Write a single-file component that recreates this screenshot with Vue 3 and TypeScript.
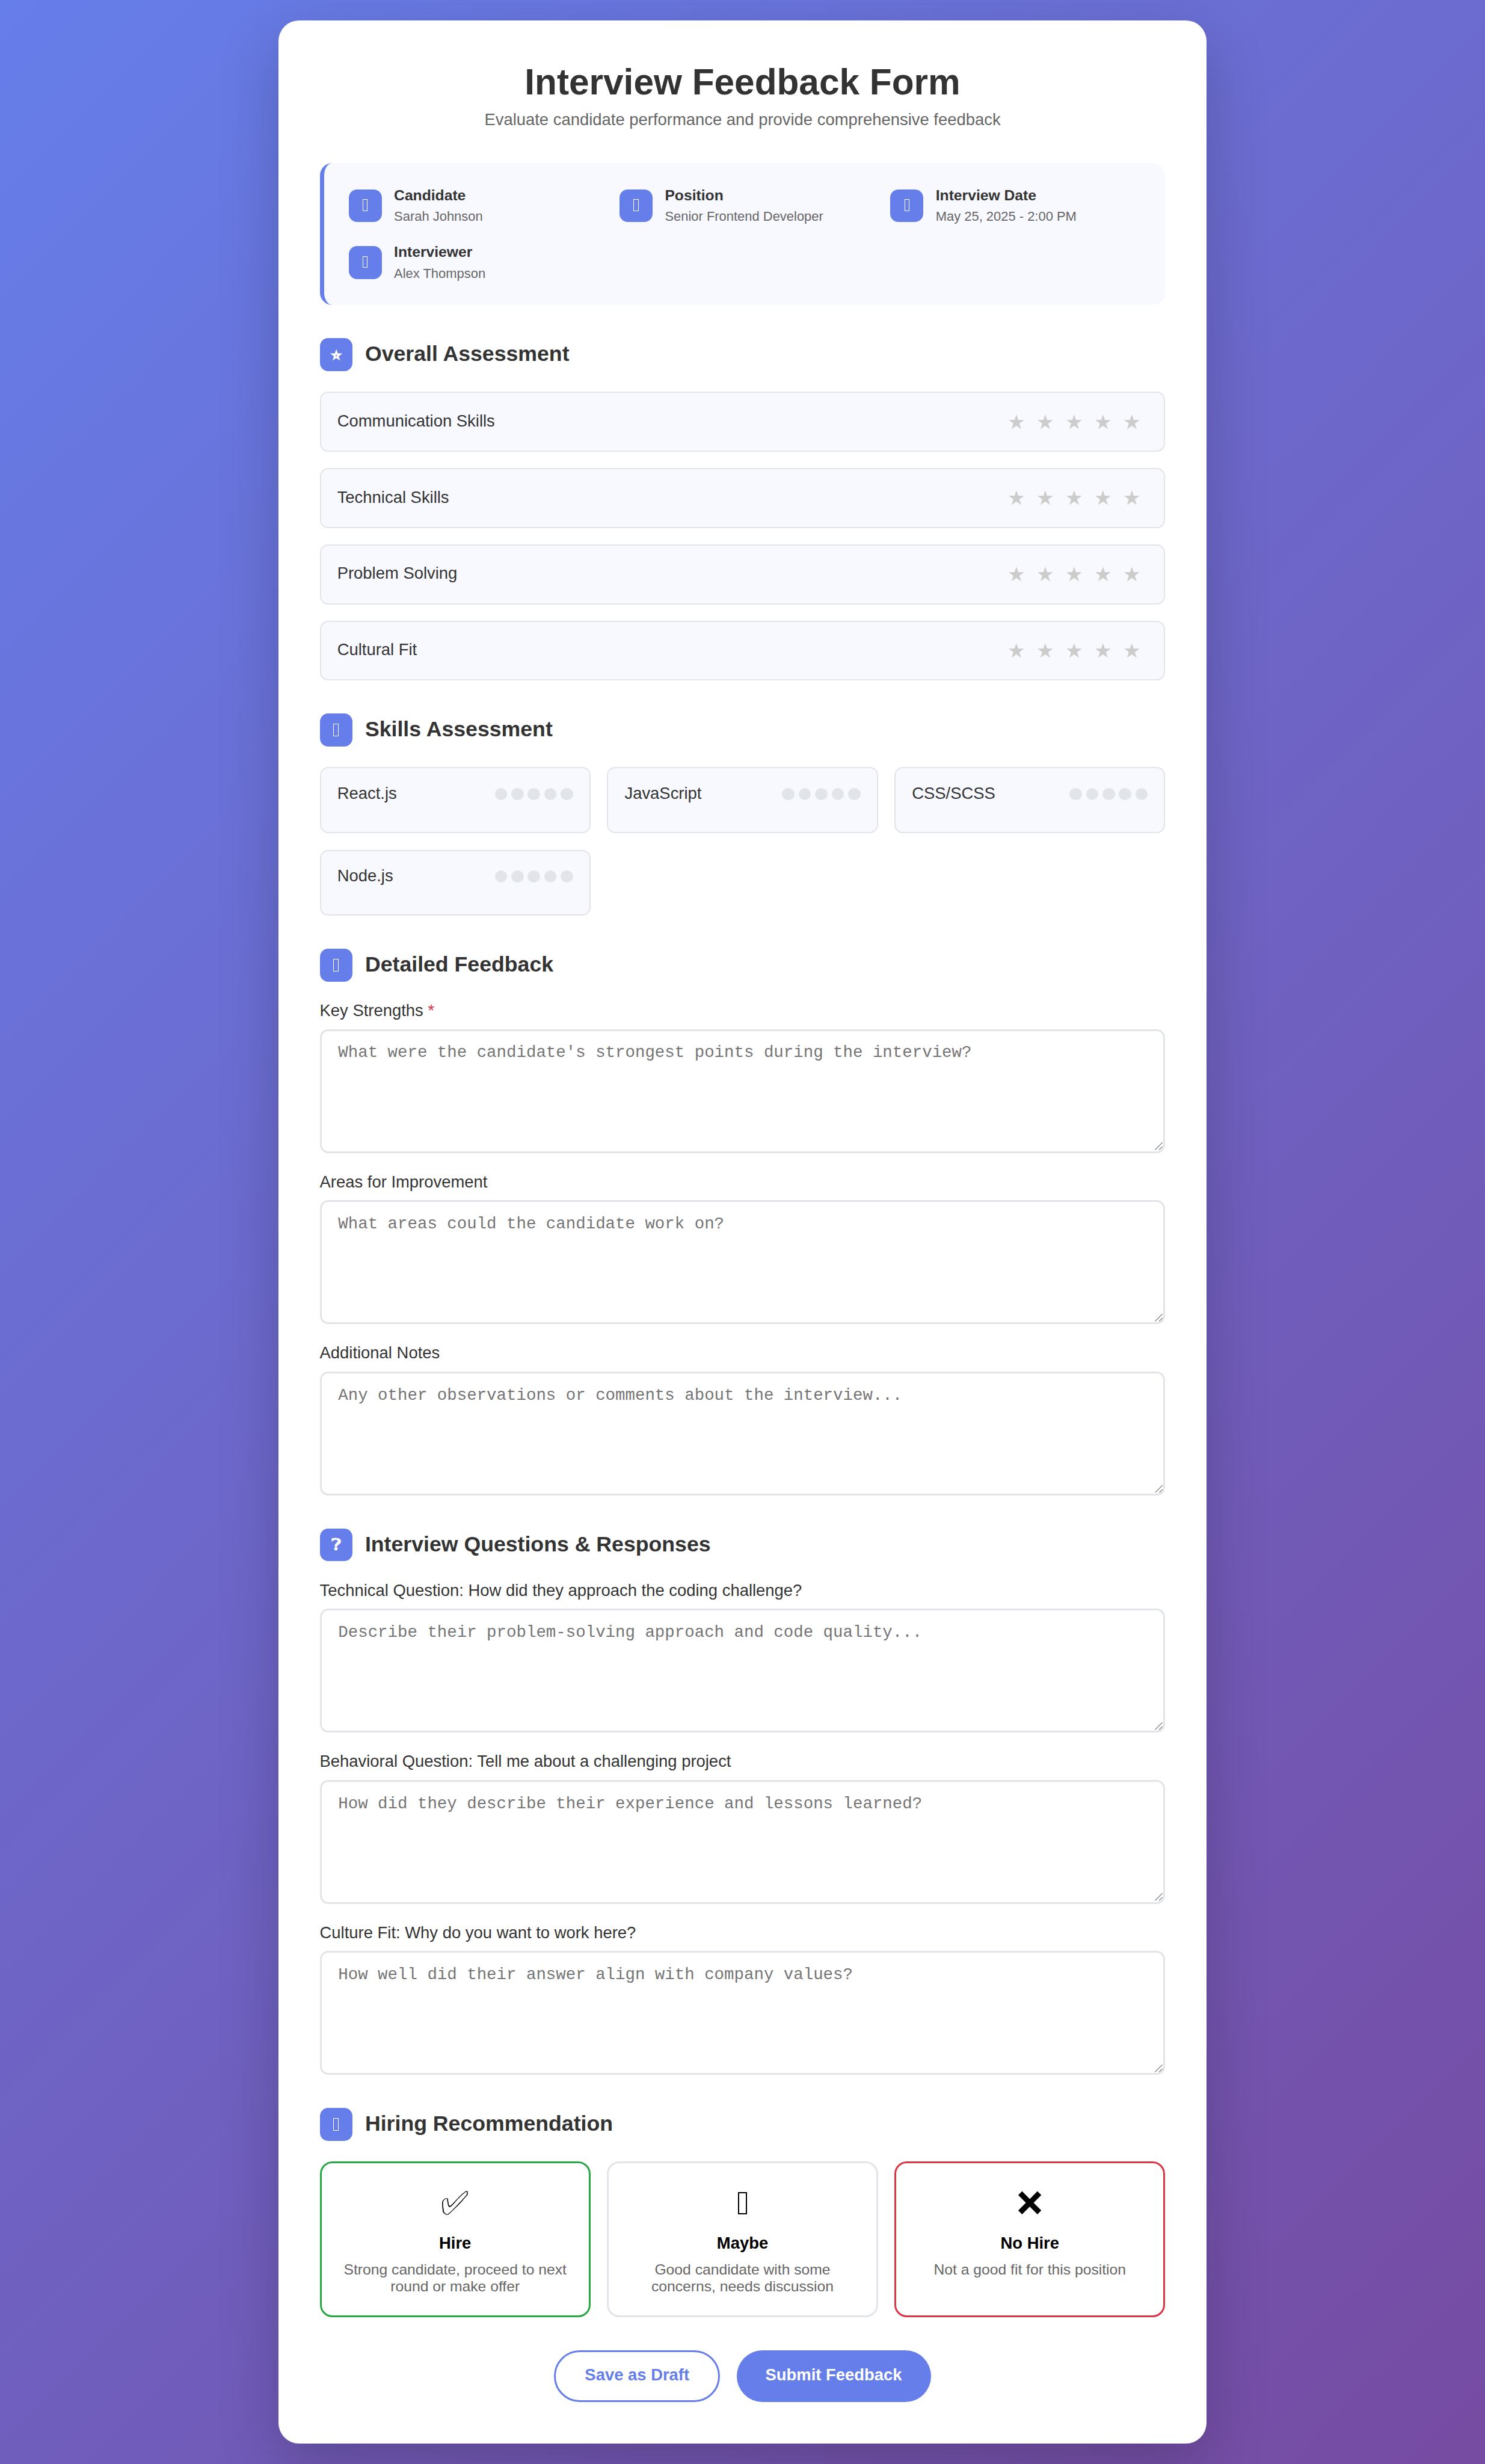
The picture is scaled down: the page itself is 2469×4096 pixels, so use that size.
<script setup lang="ts">
import { ref } from 'vue'

interface InfoItem { label: string; value: string }
interface Prompt { label: string; placeholder: string; required?: boolean }
interface Recommendation { kind: string; icon?: string; title: string; text: string }

const info: InfoItem[] = [
  { label: 'Candidate', value: 'Sarah Johnson' },
  { label: 'Position', value: 'Senior Frontend Developer' },
  { label: 'Interview Date', value: 'May 25, 2025 - 2:00 PM' },
  { label: 'Interviewer', value: 'Alex Thompson' },
]

const ratings = ref([
  { name: 'Communication Skills', score: 0 },
  { name: 'Technical Skills', score: 0 },
  { name: 'Problem Solving', score: 0 },
  { name: 'Cultural Fit', score: 0 },
])

const skills = ref([
  { name: 'React.js', level: 0 },
  { name: 'JavaScript', level: 0 },
  { name: 'CSS/SCSS', level: 0 },
  { name: 'Node.js', level: 0 },
])

const feedback: Prompt[] = [
  { label: 'Key Strengths', placeholder: "What were the candidate's strongest points during the interview?", required: true },
  { label: 'Areas for Improvement', placeholder: 'What areas could the candidate work on?' },
  { label: 'Additional Notes', placeholder: 'Any other observations or comments about the interview...' },
]

const questions: Prompt[] = [
  { label: 'Technical Question: How did they approach the coding challenge?', placeholder: 'Describe their problem-solving approach and code quality...' },
  { label: 'Behavioral Question: Tell me about a challenging project', placeholder: 'How did they describe their experience and lessons learned?' },
  { label: 'Culture Fit: Why do you want to work here?', placeholder: 'How well did their answer align with company values?' },
]

const formSections = [
  { icon: '', title: 'Detailed Feedback', prompts: feedback },
  { icon: '\u2753\uFE0E', title: 'Interview Questions & Responses', prompts: questions },
]

const recommendations: Recommendation[] = [
  { kind: 'hire', icon: '\u2705\uFE0E', title: 'Hire', text: 'Strong candidate, proceed to next round or make offer' },
  { kind: 'maybe', title: 'Maybe', text: 'Good candidate with some concerns, needs discussion' },
  { kind: 'no-hire', icon: '\u274C\uFE0E', title: 'No Hire', text: 'Not a good fit for this position' },
]
</script>

<template>
  <div class="page">
    <main class="card">
      <header class="header">
        <h1>Interview Feedback Form</h1>
        <p class="t16">Evaluate candidate performance and provide comprehensive feedback</p>
      </header>

      <section class="info">
        <div v-for="item in info" :key="item.label" class="info-item">
          <span class="icon small"><i class="glyph-box"></i></span>
          <div>
            <h4>{{ item.label }}</h4>
            <p>{{ item.value }}</p>
          </div>
        </div>
      </section>

      <section>
        <h2><span class="icon">{{ '\u2B50\uFE0E' }}</span><span class="h2-text">Overall Assessment</span></h2>
        <div class="stack">
          <div v-for="r in ratings" :key="r.name" class="rating">
            <span class="t16">{{ r.name }}</span>
            <div class="stars">
              <span v-for="n in 5" :key="n" class="star" :class="{ on: n <= r.score }" @click="r.score = n">★</span>
            </div>
          </div>
        </div>
      </section>

      <section>
        <h2><span class="icon"><i class="glyph-box"></i></span><span class="h2-text">Skills Assessment</span></h2>
        <div class="grid">
          <div v-for="s in skills" :key="s.name" class="skill">
            <span class="t16">{{ s.name }}</span>
            <div class="dots">
              <i v-for="n in 5" :key="n" :class="{ on: n <= s.level }" @click="s.level = n"></i>
            </div>
          </div>
        </div>
      </section>

      <section v-for="section in formSections" :key="section.title">
        <h2>
          <span class="icon"><template v-if="section.icon">{{ section.icon }}</template><i v-else class="glyph-box"></i></span>
          <span class="h2-text">{{ section.title }}</span>
        </h2>
        <div class="fields">
          <div v-for="f in section.prompts" :key="f.label">
            <label class="t16">{{ f.label }}<span v-if="f.required" class="required"> *</span></label>
            <div class="area">
              <textarea :placeholder="f.placeholder"></textarea>
              <svg class="grip" viewBox="0 0 8 8" aria-hidden="true">
                <path d="M0.3 7.8 L7.4 0.7 M4.2 7.8 L7.4 4.6" />
              </svg>
            </div>
          </div>
        </div>
      </section>

      <section>
        <h2><span class="icon"><i class="glyph-box"></i></span><span class="h2-text">Hiring Recommendation</span></h2>
        <div class="grid">
          <div v-for="r in recommendations" :key="r.kind" class="option" :class="r.kind">
            <div class="emoji"><template v-if="r.icon">{{ r.icon }}</template><i v-else class="glyph-box"></i></div>
            <div class="option-title t16">{{ r.title }}</div>
            <p>{{ r.text }}</p>
          </div>
        </div>
      </section>

      <div class="actions">
        <button class="btn outline"><span class="t16">Save as Draft</span></button>
        <button class="btn solid"><span class="t16">Submit Feedback</span></button>
      </div>
    </main>
  </div>
</template>

<style>
html, body { margin: 0; overflow: hidden; }
</style>

<style scoped>
* { box-sizing: border-box; margin: 0; padding: 0; }
.page {
  zoom: 1.714583;
  width: 1440px;
  height: 2389px;
  padding: 20px;
  background: linear-gradient(135deg, #667eea 0%, #764ba2 100%);
  font-family: "Liberation Sans", Arial, sans-serif;
  color: #333;
}
.card {
  width: 900px;
  height: 2349px;
  margin: 0 auto;
  padding: 40px;
  display: flex;
  flex-direction: column;
  gap: 32px;
  background: #fff;
  border-radius: 20px;
  box-shadow: 0 20px 60px rgba(0, 0, 0, 0.2);
}
.t16 { display: block; font-size: 16px; line-height: 16px; padding-bottom: 2px; }

.header { text-align: center; }
.header h1 { font-size: 35.2px; line-height: 39px; margin-bottom: 9px; }
.header p { color: #666; }

.info {
  display: grid;
  grid-template-columns: repeat(3, 1fr);
  gap: 20px;
  padding: 24px;
  background: #f8f9ff;
  border-left: 4.1px solid #667eea;
  border-radius: 12px;
}
.info-item { display: flex; align-items: center; gap: 12px; height: 35px; }
.info-item h4 { font-size: 14.4px; line-height: 15.5px; margin-bottom: 4.5px; }
.info-item p { font-size: 12.8px; line-height: 16px; margin-bottom: -1px; color: #666; }

.icon {
  display: flex;
  align-items: center;
  justify-content: center;
  flex: none;
  width: 32px;
  height: 32px;
  border-radius: 8px;
  background: #667eea;
  color: #fff;
  font-family: "DejaVu Sans", sans-serif;
  font-variant-emoji: text;
  font-size: 16px;
  line-height: 18px;
}
.glyph-box { display: block; width: 5.2px; height: 12px; border: 0.6px solid currentColor; }
.small .glyph-box { width: 4.8px; height: 11.4px; margin-bottom: 1.2px; }

h2 {
  display: flex;
  align-items: center;
  gap: 12px;
  height: 32px;
  margin-bottom: 20px;
  font-size: 20.8px;
  line-height: 24px;
}
.h2-text { padding-bottom: 1px; }

.stack { display: flex; flex-direction: column; gap: 16px; }
.rating {
  display: flex;
  align-items: center;
  justify-content: space-between;
  height: 58px;
  padding: 0 15.83px;
  background: #f8f9ff;
  border: 1.17px solid #e1e5e9;
  border-radius: 8px;
}
.stars { display: flex; margin-right: 1.5px; }
.star {
  width: 28px;
  height: 24px;
  text-align: center;
  font-size: 19.2px;
  line-height: 24px;
  color: #ccc;
  cursor: pointer;
}
.star.on { color: #ffc107; }

.grid { display: grid; grid-template-columns: repeat(3, 1fr); gap: 16px; }
.skill {
  display: flex;
  align-items: flex-start;
  justify-content: space-between;
  height: 64px;
  padding: 15.83px;
  background: #f8f9ff;
  border: 1.17px solid #e1e5e9;
  border-radius: 8px;
}
.dots { display: flex; gap: 4px; padding-top: 3px; }
.dots i { width: 12px; height: 12px; border-radius: 50%; background: #e1e5e9; }
.dots i.on { background: #667eea; }

.fields { display: flex; flex-direction: column; gap: 20px; }
.fields label { margin-bottom: 8px; }
.required { color: #dc3545; }
.area { position: relative; }
textarea {
  display: block;
  width: 100%;
  height: 120px;
  padding: 12.6px 16.2px;
  border: 2px solid #e1e5e9;
  border-radius: 8px;
  background: #fff;
  font-family: "Liberation Mono", monospace;
  font-size: 16px;
  line-height: 18px;
  resize: none;
}
textarea::placeholder { color: #757575; }
.grip {
  position: absolute;
  right: 2.4px;
  bottom: 2.6px;
  width: 8px;
  height: 8px;
  fill: none;
  stroke: #666;
  stroke-width: 0.6;
  pointer-events: none;
}

.option {
  height: 151px;
  padding: 20px;
  text-align: center;
  border: 2px solid #e1e5e9;
  border-radius: 12px;
}
.option.hire { border-color: #28a745; }
.option.no-hire { border-color: #dc3545; }
.emoji {
  display: flex;
  align-items: center;
  justify-content: center;
  height: 37px;
  margin-bottom: 12px;
  font-family: "DejaVu Sans", sans-serif;
  font-variant-emoji: text;
  font-size: 32px;
  line-height: 37px;
  color: #000;
}
.emoji .glyph-box { width: 9.2px; height: 21.8px; border-width: 1.17px; }
.option-title { margin-bottom: 8px; font-weight: bold; color: #000; }
.option p { font-size: 14.4px; line-height: 16px; color: #666; }

.actions { display: flex; justify-content: center; gap: 16px; }
.btn {
  display: flex;
  align-items: center;
  justify-content: center;
  height: 50px;
  padding: 0 28px;
  border: none;
  border-radius: 25px;
  font-family: inherit;
  font-weight: bold;
}
.btn.outline { border: 2px solid #667eea; background: #fff; color: #667eea; }
.btn.solid { background: #667eea; color: #fff; }
</style>
